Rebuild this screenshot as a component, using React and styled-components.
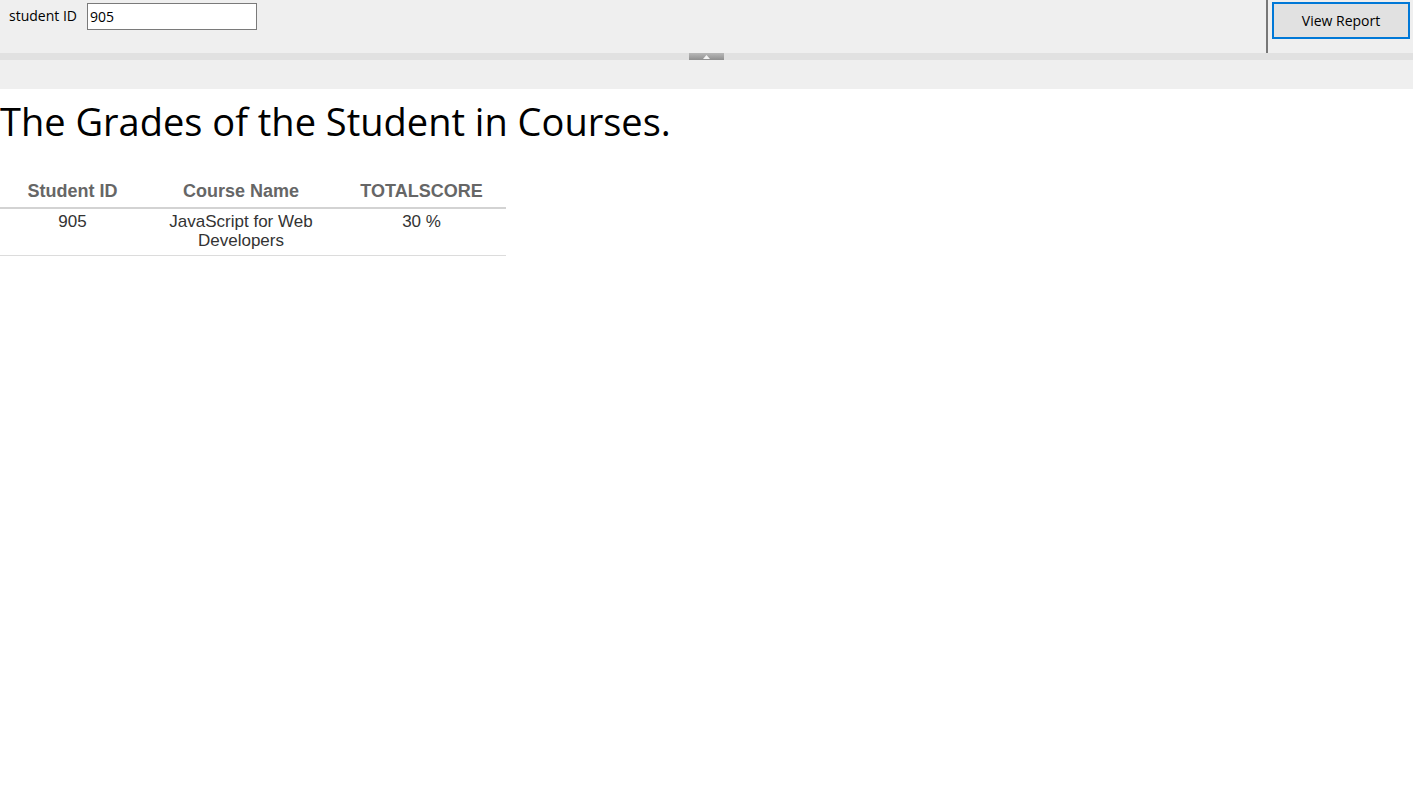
import React from "react";
import styled, { createGlobalStyle } from "styled-components";

const GlobalStyle = createGlobalStyle`
  html, body {
    margin: 0;
    padding: 0;
    background: #ffffff;
  }
`;

const StyledToolbar = styled.div`
  display: flex;
  justify-content: space-between;
  align-items: stretch;
  height: 53px;
  background: #efefef;
  font-family: "Open Sans", "Noto Sans", sans-serif;
`;

const StyledParams = styled.div`
  display: flex;
  align-items: flex-start;
  gap: 10px;
  padding: 3px 0 0 9px;
`;

const StyledLabel = styled.label`
  font-size: 14px;
  color: #000;
  line-height: 26px;
`;

const StyledInput = styled.input`
  box-sizing: border-box;
  width: 170px;
  height: 27px;
  border: 1px solid #7a7a7a;
  background: #fff;
  padding: 0 2px;
  font-family: "Open Sans", "Noto Sans", sans-serif;
  font-size: 14px;
  color: #000;
  outline: none;
`;

const StyledActions = styled.div`
  display: flex;
  align-items: flex-start;
  border-left: 2px solid #777;
  padding: 2px 3px 0 4px;
`;

const StyledButton = styled.button`
  box-sizing: border-box;
  width: 138px;
  height: 37px;
  border: 2px solid #0078d7;
  background: #e1e1e1;
  font-family: "Open Sans", "Noto Sans", sans-serif;
  font-size: 14px;
  color: #000;
  cursor: pointer;
`;

const StyledSplitter = styled.div`
  display: flex;
  justify-content: center;
  height: 7px;
  background: #e1e1e1;
`;

const StyledHandle = styled.div`
  width: 35px;
  height: 7px;
  display: flex;
  justify-content: center;
  align-items: center;
  background: linear-gradient(#b8b8b8, #8f8f8f);
`;

const StyledStrip = styled.div`
  height: 29px;
  background: #efefef;
`;

const StyledTitle = styled.h1`
  margin: 0;
  padding-top: 7px;
  font-family: "Open Sans", "Noto Sans", sans-serif;
  font-weight: 400;
  font-size: 38px;
  line-height: 50px;
  color: #000;
`;

const StyledTable = styled.table`
  margin-top: 31px;
  border-collapse: collapse;
  width: 506px;
  font-family: "Liberation Sans", Arial, sans-serif;
`;

const StyledTh = styled.th`
  width: ${({ width }) => width}px;
  font-size: 18px;
  font-weight: bold;
  color: #666;
  padding: 0 0 2px;
  height: 28px;
  border-bottom: 2px solid #d3d3d3;
  text-align: center;
`;

const StyledTd = styled.td`
  font-size: 17px;
  line-height: 19px;
  color: #333;
  text-align: center;
  vertical-align: top;
  padding: 3px 6px 5px;
  border-bottom: 1px solid #dcdcdc;
`;

const rows = [
  { id: "905", course: "JavaScript for Web Developers", score: "30 %" },
];

const App = () => {
  return (
    <>
      <GlobalStyle />
      <StyledToolbar>
        <StyledParams>
          <StyledLabel htmlFor="studentId">student ID</StyledLabel>
          <StyledInput id="studentId" defaultValue="905" />
        </StyledParams>
        <StyledActions>
          <StyledButton>View Report</StyledButton>
        </StyledActions>
      </StyledToolbar>
      <StyledSplitter>
        <StyledHandle>
          <svg width="7" height="4" viewBox="0 0 7 4">
            <path d="M0 4 L3.5 0 L7 4 Z" fill="#f4f4f4" />
          </svg>
        </StyledHandle>
      </StyledSplitter>
      <StyledStrip />
      <StyledTitle>The Grades of the Student in Courses.</StyledTitle>
      <StyledTable>
        <thead>
          <tr>
            <StyledTh width={145}>Student ID</StyledTh>
            <StyledTh width={192}>Course Name</StyledTh>
            <StyledTh width={169}>TOTALSCORE</StyledTh>
          </tr>
        </thead>
        <tbody>
          {rows.map((row) => (
            <tr key={row.id}>
              <StyledTd>{row.id}</StyledTd>
              <StyledTd>{row.course}</StyledTd>
              <StyledTd>{row.score}</StyledTd>
            </tr>
          ))}
        </tbody>
      </StyledTable>
    </>
  );
};

export default App;
